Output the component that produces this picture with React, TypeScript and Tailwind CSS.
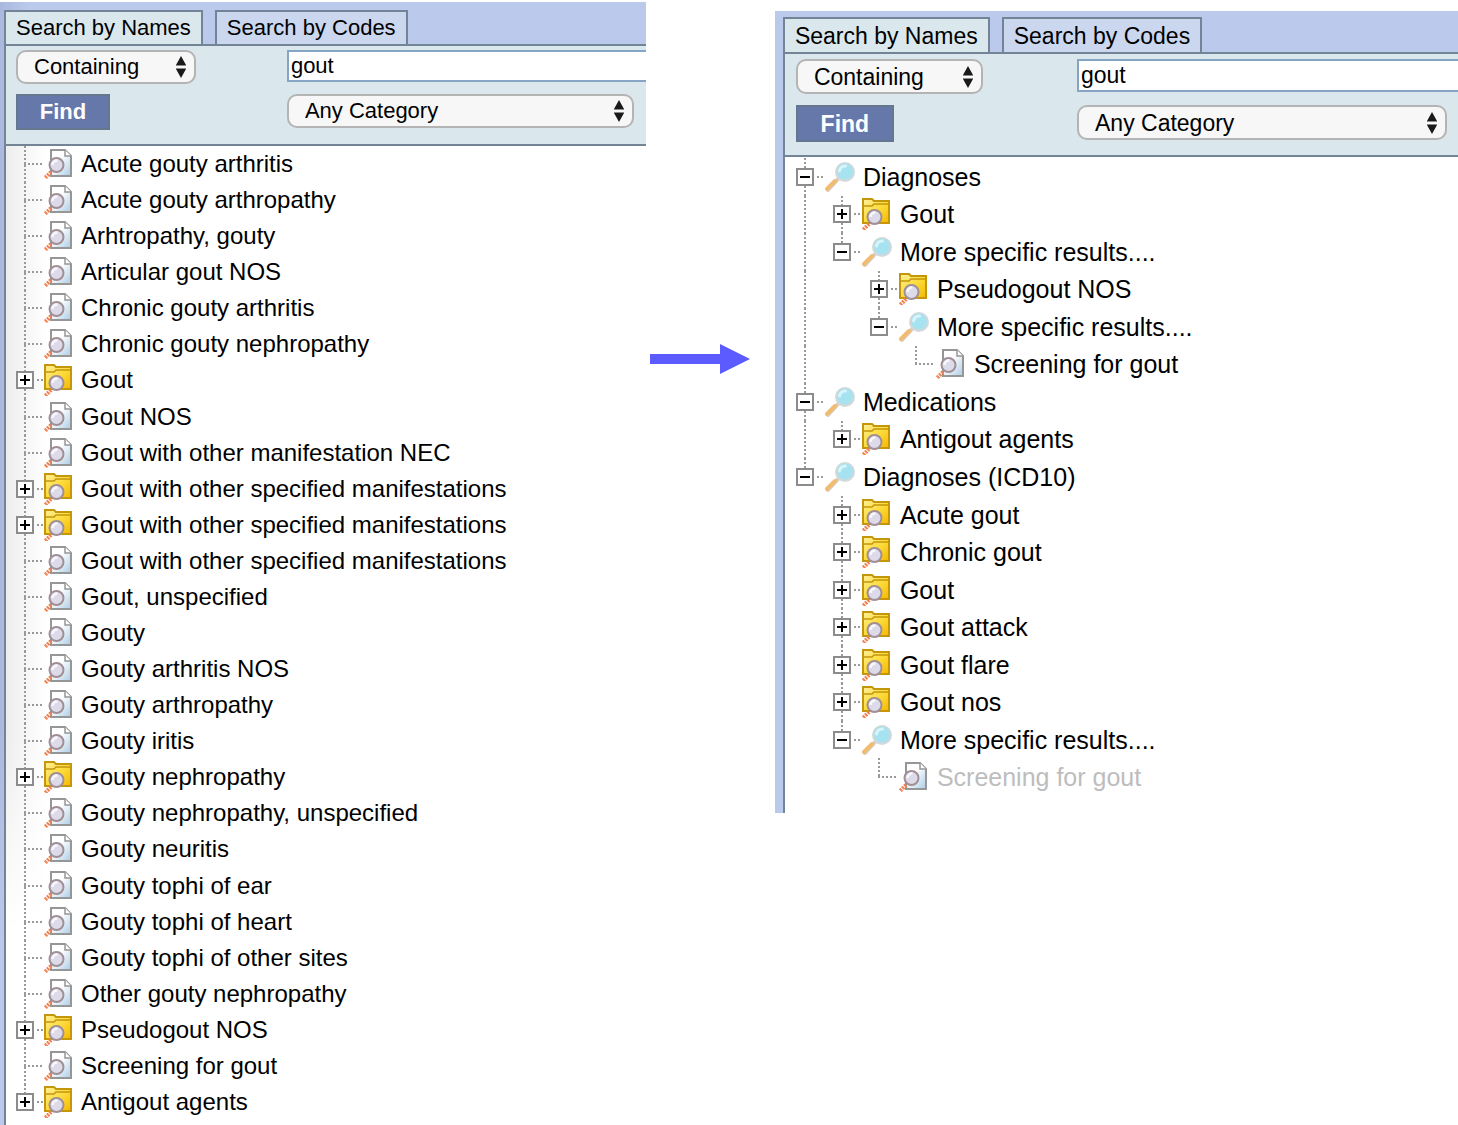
import { useState } from "react"

type Kind = "file" | "folder" | "search"

// trail holds one mark per ancestor level: "|" keeps the dotted line going, " " leaves it empty
type Node = { label: string; kind: Kind; trail?: string; open?: boolean; last?: boolean; muted?: boolean }

const nameResults: Node[] = [
    { label: "Acute gouty arthritis", kind: "file" },
    { label: "Acute gouty arthropathy", kind: "file" },
    { label: "Arhtropathy, gouty", kind: "file" },
    { label: "Articular gout NOS", kind: "file" },
    { label: "Chronic gouty arthritis", kind: "file" },
    { label: "Chronic gouty nephropathy", kind: "file" },
    { label: "Gout", kind: "folder" },
    { label: "Gout NOS", kind: "file" },
    { label: "Gout with other manifestation NEC", kind: "file" },
    { label: "Gout with other specified manifestations", kind: "folder" },
    { label: "Gout with other specified manifestations", kind: "folder" },
    { label: "Gout with other specified manifestations", kind: "file" },
    { label: "Gout, unspecified", kind: "file" },
    { label: "Gouty", kind: "file" },
    { label: "Gouty arthritis NOS", kind: "file" },
    { label: "Gouty arthropathy", kind: "file" },
    { label: "Gouty iritis", kind: "file" },
    { label: "Gouty nephropathy", kind: "folder" },
    { label: "Gouty nephropathy, unspecified", kind: "file" },
    { label: "Gouty neuritis", kind: "file" },
    { label: "Gouty tophi of ear", kind: "file" },
    { label: "Gouty tophi of heart", kind: "file" },
    { label: "Gouty tophi of other sites", kind: "file" },
    { label: "Other gouty nephropathy", kind: "file" },
    { label: "Pseudogout NOS", kind: "folder" },
    { label: "Screening for gout", kind: "file" },
    { label: "Antigout agents", kind: "folder", last: true },
]

const groupedResults: Node[] = [
    { label: "Diagnoses", kind: "search", open: true },
    { label: "Gout", kind: "folder", trail: "|" },
    { label: "More specific results....", kind: "search", trail: "|", open: true, last: true },
    { label: "Pseudogout NOS", kind: "folder", trail: "| " },
    { label: "More specific results....", kind: "search", trail: "| ", open: true, last: true },
    { label: "Screening for gout", kind: "file", trail: "|  ", last: true },
    { label: "Medications", kind: "search", open: true },
    { label: "Antigout agents", kind: "folder", trail: "|", last: true },
    { label: "Diagnoses (ICD10)", kind: "search", open: true, last: true },
    { label: "Acute gout", kind: "folder", trail: " " },
    { label: "Chronic gout", kind: "folder", trail: " " },
    { label: "Gout", kind: "folder", trail: " " },
    { label: "Gout attack", kind: "folder", trail: " " },
    { label: "Gout flare", kind: "folder", trail: " " },
    { label: "Gout nos", kind: "folder", trail: " " },
    { label: "More specific results....", kind: "search", trail: " ", open: true, last: true },
    { label: "Screening for gout", kind: "file", trail: "  ", last: true, muted: true },
]

const SmallLens = ({ y }: { y: number }) => (
    <>
        <path d={`M8 ${y + 7}l-6 6`} stroke="#f4804f" strokeWidth="4" strokeDasharray="2 1" />
        <circle cx="13.5" cy={y} r="7" fill="#dddaea" stroke="#a08f95" strokeWidth="2" />
        <path d={`M9.5 ${y}a4.5 4.5 0 0 1 5-4.5`} stroke="#f8f7fc" strokeWidth="2.5" fill="none" />
    </>
)

const FileIcon = () => (
    <svg viewBox="0 0 30 32" className="h-8 w-[30px] shrink-0" aria-hidden="true">
        <defs>
            <linearGradient id="sheet" x1="0" y1="0" x2="1" y2="1">
                <stop offset="0.4" stopColor="#fff" />
                <stop offset="1" stopColor="#a9cbe6" />
            </linearGradient>
        </defs>
        <path d="M8 2h14l6 6v20H8z" fill="url(#sheet)" stroke="#969696" strokeWidth="2" />
        <path d="M22 2v6h6" fill="#fff" stroke="#969696" strokeWidth="1.5" />
        <SmallLens y={17} />
    </svg>
)

const FolderIcon = () => (
    <svg viewBox="0 0 30 32" className="h-8 w-[30px] shrink-0" aria-hidden="true">
        <defs>
            <linearGradient id="folder" x1="0" y1="0" x2="1" y2="1">
                <stop offset="0" stopColor="#fff09a" />
                <stop offset="0.5" stopColor="#fcdc3c" />
                <stop offset="1" stopColor="#f5b800" />
            </linearGradient>
        </defs>
        <path d="M2 25V1h9l2 2h15v22z" fill="url(#folder)" stroke="#c4960c" strokeWidth="2" />
        <path d="M2 8h9l2-2h15" fill="none" stroke="#c4960c" strokeWidth="1.5" />
        <SmallLens y={19} />
    </svg>
)

const SearchIcon = () => (
    <svg viewBox="0 0 32 32" className="h-8 w-8 shrink-0" aria-hidden="true">
        <path d="M15 17L4 29" stroke="#d3cfca" strokeWidth="4" strokeLinecap="round" />
        <path d="M11 20L3 28" stroke="#f1bb70" strokeWidth="4" strokeLinecap="round" />
        <circle cx="21" cy="11" r="10" fill="#d3d8da" />
        <circle cx="21" cy="10.5" r="8" fill="#a6e2ef" />
        <path d="M15.500 10a5.500 5.500 0 0 1 6-5" stroke="#d8f5fa" strokeWidth="3" fill="none" strokeLinecap="round" />
    </svg>
)

const Arrows = () => (
    <svg viewBox="0 0 10 22" className="pointer-events-none absolute top-1/2 right-[10px] h-[22px] w-[10px] -translate-y-1/2" aria-hidden="true">
        <path d="M5 0L10 9H0z M5 22L0 13H10z" fill="#1a1a1a" />
        <path d="M0 9.500h10M0 12.500h10" stroke="#8a8a8a" strokeWidth="1" />
    </svg>
)

const dotsDown = "w-[2px] bg-[repeating-linear-gradient(to_bottom,#9a9a9a_0_2px,transparent_2px_4px)]"
const dotsAcross = "h-[2px] bg-[repeating-linear-gradient(to_right,#9a9a9a_0_2px,transparent_2px_4px)]"

const TreeRow = ({ node, cell }: { node: Node; cell: string }) => {
    const [open, setOpen] = useState(node.open ?? false)
    const isFile = node.kind === "file"

    return (
        <li className="flex items-stretch">
            {(node.trail ?? "").split("").map((mark, i) => (
                <div key={i} className={`${cell} flex shrink-0 justify-center`}>
                    {mark === "|" && <div className={dotsDown} />}
                </div>
            ))}
            <div className={`${cell} grid shrink-0 grid-cols-[1fr_2px_1fr] grid-rows-[1fr_auto_1fr] items-center`}>
                <div className={`${dotsDown} col-start-2 row-start-1 h-full`} />
                {isFile ? (
                    <div className={`${dotsAcross} col-span-2 col-start-2 row-start-2`} />
                ) : (
                    <>
                        <button
                            type="button"
                            aria-label={`${open ? "Collapse" : "Expand"} ${node.label}`}
                            onClick={() => setOpen(!open)}
                            className="col-span-3 col-start-1 row-start-2 flex h-[18px] w-[18px] items-center justify-center justify-self-center border-2 border-[#8c8c8c] bg-white"
                        >
                            <svg viewBox="0 0 10 10" className="h-[10px] w-[10px]" aria-hidden="true">
                                <path d={open ? "M0 5h10" : "M0 5h10M5 0v10"} stroke="#000" strokeWidth="2" />
                            </svg>
                        </button>
                        <div className={`${dotsAcross} col-start-3 row-start-2 ml-[11px]`} />
                    </>
                )}
                {!node.last && <div className={`${dotsDown} col-start-2 row-start-3 h-full`} />}
            </div>
            <div className={`${cell} flex shrink-0 items-center`}>
                {isFile && <FileIcon />}
                {node.kind === "folder" && <FolderIcon />}
                {node.kind === "search" && <SearchIcon />}
            </div>
            <span className={`self-center pl-[2px] whitespace-nowrap ${node.muted ? "text-[#bdbdbd]" : "text-black"}`}>{node.label}</span>
        </li>
    )
}

const SelectBox = ({ label, value, className }: { label: string; value: string; className: string }) => (
    <div className={`relative ${className}`}>
        <select aria-label={label} className="h-full w-full appearance-none rounded-[10px] border-2 border-[#b4b4b4] bg-[#f7f7f7] pl-4 text-black">
            <option>{value}</option>
        </select>
        <Arrows />
    </div>
)

const App = () => {
    return (
        <main className="flex min-h-screen items-start overflow-hidden bg-white font-['Liberation_Sans',Arial,sans-serif] text-black">
            <section className="mt-[2px] w-[44.3%] shrink-0 bg-[#bbcaec] bg-[linear-gradient(to_bottom,transparent_65%,#bbcaec_85%),linear-gradient(to_right,#a9b8dc,#bbcaec_30px)] pl-1 text-[22px] leading-[28px]">
                <div className="flex gap-3 pt-2">
                    <button type="button" className="h-[34px] border-2 border-b-0 border-[#738497] bg-[#dae7ec] px-[10px]">Search by Names</button>
                    <button type="button" className="h-[34px] border-2 border-b-0 border-[#738497] bg-[#cbd6ef] px-[10px]">Search by Codes</button>
                </div>
                <div className="border-y-2 border-l-2 border-[#738497] bg-[#dae7ec] pt-1 pl-[10px]">
                    <div className="flex h-[34px] justify-between">
                        <SelectBox label="Match" value="Containing" className="w-[180px]" />
                        <input aria-label="Search text" defaultValue="gout" className="h-8 w-[359px] border-2 border-r-0 border-[#86a5c3] bg-white px-[2px]" />
                    </div>
                    <div className="mt-[10px] mb-[14px] flex items-start justify-between pr-3">
                        <button type="button" className="h-9 w-[94px] border-2 border-[#64778f] bg-[#6678aa] font-bold text-white">Find</button>
                        <SelectBox label="Category" value="Any Category" className="h-[34px] w-[347px]" />
                    </div>
                </div>
                <ul className="grid h-[980px] auto-rows-fr border-l-2 border-[#738497] bg-white bg-[linear-gradient(to_bottom,transparent_60%,white_80%),linear-gradient(to_right,#ededed,white_40px)] pb-[6px] pl-px text-[24px]">
                    {nameResults.map((node, i) => (
                        <TreeRow key={i} node={node} cell="w-9" />
                    ))}
                </ul>
            </section>

            <svg viewBox="0 0 100 30" className="mx-1 mt-[344px] h-[30px] w-[100px] shrink-0" aria-hidden="true">
                <path d="M0 10h70V0l30 15-30 15V20H0z" fill="#5b5bff" />
            </svg>

            <section className="mt-[11px] ml-[21px] min-w-0 grow bg-[#bbcaec] pl-2 text-[23px] leading-[28px]">
                <div className="flex gap-3 pt-[6px]">
                    <button type="button" className="h-[35px] border-2 border-b-0 border-[#738497] bg-[#dae7ec] px-[10px]">Search by Names</button>
                    <button type="button" className="h-[35px] border-2 border-b-0 border-[#738497] bg-[#cbd6ef] px-[10px]">Search by Codes</button>
                </div>
                <div className="border-y-2 border-l-2 border-[#738497] bg-[#dae7ec] pt-[5px] pl-[11px]">
                    <div className="flex h-[35px] justify-between">
                        <SelectBox label="Match" value="Containing" className="w-[187px]" />
                        <input aria-label="Search text" defaultValue="gout" className="h-[33px] w-[381px] border-2 border-r-0 border-[#86a5c3] bg-white px-[2px]" />
                    </div>
                    <div className="mt-[11px] mb-[13px] flex items-start justify-between pr-[11px]">
                        <button type="button" className="h-[37px] w-[98px] border-2 border-[#64778f] bg-[#6678aa] font-bold text-white">Find</button>
                        <SelectBox label="Category" value="Any Category" className="h-[35px] w-[370px]" />
                    </div>
                </div>
                <ul className="grid h-[656px] auto-rows-fr border-l-2 border-[#738497] bg-white pt-px pb-[17px] pl-[2px] text-[25px]">
                    {groupedResults.map((node, i) => (
                        <TreeRow key={i} node={node} cell="w-[37px]" />
                    ))}
                </ul>
            </section>
        </main>
    )
}

export default App
